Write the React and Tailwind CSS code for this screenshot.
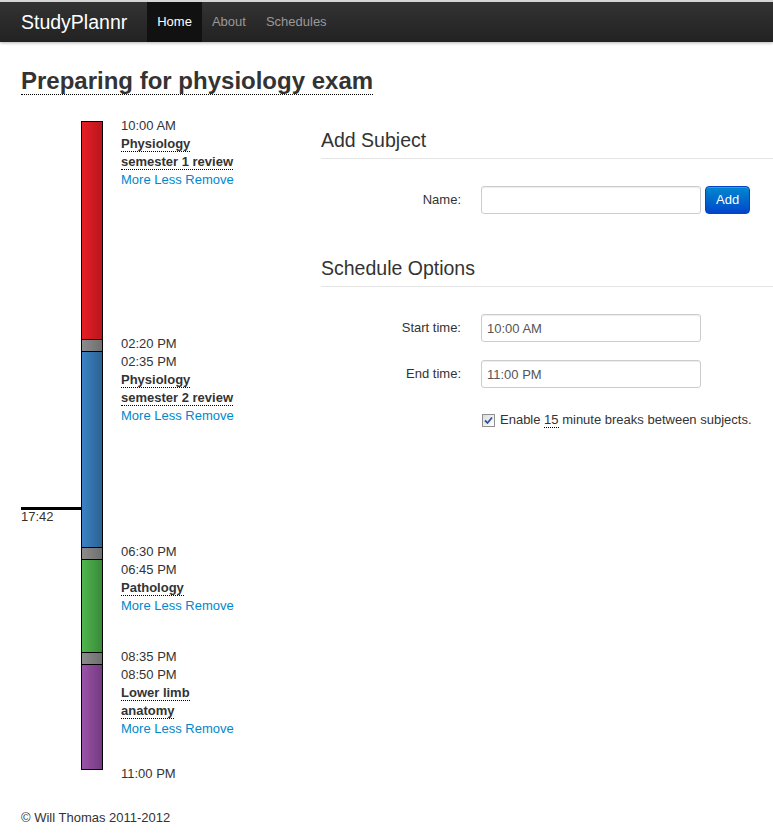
import React from "react";

const groups = [
  {
    breakTime: null,
    time: "10:00 AM",
    name: "Physiology semester 1 review",
    height: 218,
    color: "bg-linear-to-r from-[#e81e26] to-[#b8161c]",
  },
  {
    breakTime: "02:20 PM",
    time: "02:35 PM",
    name: "Physiology semester 2 review",
    height: 196,
    color: "bg-linear-to-r from-[#3b83c5] to-[#2b6293]",
  },
  {
    breakTime: "06:30 PM",
    time: "06:45 PM",
    name: "Pathology",
    height: 93,
    color: "bg-linear-to-r from-[#4fb64d] to-[#3a8a39]",
  },
  {
    breakTime: "08:35 PM",
    time: "08:50 PM",
    name: "Lower limb anatomy",
    height: 105,
    color: "bg-linear-to-r from-[#9b53a9] to-[#743b80]",
    last: true,
  },
];

function Navbar() {
  return (
    <div className="relative z-10 border-t-2 border-[#d6d6d6] shadow-[0_1px_3px_rgba(0,0,0,0.3)]">
      <div className="h-[40px] bg-linear-to-b from-[#333333] to-[#222222] flex items-stretch pl-[21px]">
        <a className="text-[19.5px] text-white leading-[40px] pr-[20px]">StudyPlannr</a>
        <a className="bg-[#111111] text-white text-[13px] px-[10px] leading-[40px]">Home</a>
        <a className="text-[#999999] text-[13px] px-[10px] leading-[40px]">About</a>
        <a className="text-[#999999] text-[13px] px-[10px] leading-[40px]">Schedules</a>
      </div>
    </div>
  );
}

function SubjectLabel({ group }) {
  return (
    <div className="ml-[18px] -mt-[4px] w-[120px] leading-[18px] text-[13px] text-[#333333]">
      {group.breakTime && <div>{group.breakTime}</div>}
      <div>{group.time}</div>
      <div className="font-bold">
        <span className="border-b border-dotted border-black">{group.name}</span>
      </div>
      <div className="text-[#0088cc]">
        <a>More</a> <a>Less</a> <a>Remove</a>
      </div>
    </div>
  );
}

function Timeline() {
  return (
    <div className="relative w-[280px]">
      {groups.map((g, i) => (
        <div key={i} className="flex">
          <div className="w-[60px]"></div>
          <div className="w-[22px] flex flex-col">
            {g.breakTime && (
              <div className="h-[12px] border-t border-x border-black bg-linear-to-r from-[#8c8c8c] to-[#6f6f6f]"></div>
            )}
            <div
              className={
                g.last
                  ? "h-[106px] border border-black " + g.color
                  : "border-t border-x border-black " + g.color
              }
              style={g.last ? undefined : { height: g.height }}
            ></div>
          </div>
          <SubjectLabel group={g} />
        </div>
      ))}
      <div className="pl-[100px] -mt-[5px] leading-[18px] text-[13px] text-[#333333]">11:00 PM</div>

      {/* current time marker */}
      <div className="absolute top-[386px] left-0 w-[60px] border-t-[3px] border-black text-[13px] leading-[13px] text-[#333333]">
        17:42
      </div>
    </div>
  );
}

function Field({ label, value, children }) {
  return (
    <div className="flex mb-[18px]">
      <label className="w-[140px] text-right pt-[5px] leading-[18px] text-[13px] text-[#333333]">{label}</label>
      <div className="ml-[20px] flex items-center">
        <input
          type="text"
          defaultValue={value}
          className="w-[220px] h-[28px] border border-[#cccccc] rounded-[3px] px-[5px] text-[13px] text-[#555555] bg-white shadow-[inset_0_1px_1px_rgba(0,0,0,0.075)] outline-none"
        />
        {children}
      </div>
    </div>
  );
}

function Forms() {
  return (
    <div className="flex-1 mt-[1px]">
      <div className="text-[19.5px] leading-[36px] text-[#333333] border-b border-[#e5e5e5] mb-[27px]">Add Subject</div>
      <Field label="Name:" value="">
        <button className="ml-[4px] h-[28px] px-[10px] rounded-[4px] border border-[#0044cc] bg-linear-to-b from-[#0088cc] to-[#0044cc] text-white text-[13px] leading-[18px] shadow-[inset_0_1px_0_rgba(255,255,255,0.2)]">
          Add
        </button>
      </Field>

      <div className="text-[19.5px] leading-[36px] text-[#333333] border-b border-[#e5e5e5] mb-[27px] mt-[36px]">
        Schedule Options
      </div>
      <Field label="Start time:" value="10:00 AM" />
      <Field label="End time:" value="11:00 PM" />
      <div className="ml-[160px] pt-[5px] flex items-center leading-[18px] text-[13px] text-[#333333]">
        <span className="ml-[1px] mr-[5px] w-[13px] h-[13px] border border-[#8f8f8f] bg-linear-to-br from-[#dcdcdc] to-[#ffffff] flex items-center justify-center">
          <svg width="9" height="9" viewBox="0 0 9 9">
            <path d="M1 4.5 L3.5 7 L8 1.5" fill="none" stroke="#34509e" strokeWidth="1.8" />
          </svg>
        </span>
        <span>
          Enable <span className="border-b border-dotted border-black">15</span> minute breaks between subjects.
        </span>
      </div>
    </div>
  );
}

export default function App() {
  return (
    <div className="font-['Liberation_Sans',Arial,sans-serif] bg-white min-h-[836px] text-[#333333]">
      <Navbar />
      <div className="pl-[21px]">
        <h1 className="mt-[26px] text-[24px] font-bold leading-[26px]">
          <span className="inline-block border-b border-dotted border-black">Preparing for physiology exam</span>
        </h1>
        <div className="flex mt-[26px]">
          <Timeline />
          <div className="w-[20px]"></div>
          <Forms />
        </div>
        <div className="mt-[26px] text-[13px] leading-[18px]">© Will Thomas 2011-2012</div>
      </div>
    </div>
  );
}
